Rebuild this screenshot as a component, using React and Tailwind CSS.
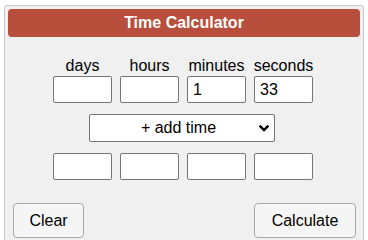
import React from "react";

const labels = ["days", "hours", "minutes", "seconds"];
const values = ["", "", "1", "33"];

function Field({ value }) {
  return (
    <input
      readOnly
      value={value}
      className="w-[59px] h-[27px] border border-[#767676] rounded-[2px] bg-white pl-[5px] text-[16px] leading-[18px] text-black outline-none"
    />
  );
}

export default function App() {
  return (
    <div className="w-[368px] h-[240px] bg-white overflow-hidden" style={{ fontFamily: '"Liberation Sans", Arial, sans-serif' }}>
      <div className="ml-[4px] mt-[5px] w-[360px] h-[260px] border border-[#c8c8c8] rounded-[3px] bg-[#f0f0f0] p-[3px]">
        <div className="h-[28px] rounded-[4px] bg-[#b84e3c] text-white font-bold text-[16px] leading-[28px] text-center">
          Time Calculator
        </div>
        <div className="mt-[20px] flex justify-center gap-[8px] pr-[2px]">
          {labels.map((l, i) => (
            <div key={l} className="flex flex-col items-center w-[59px]">
              <div className="text-[16px] leading-[18px] text-black whitespace-nowrap">{l}</div>
              <div className="mt-[1px]">
                <Field value={values[i]} />
              </div>
            </div>
          ))}
        </div>
        <div className="mt-[11px] flex justify-center">
          <div className="relative mr-[5px] w-[186px] h-[28px] border border-[#767676] rounded-[2px] bg-white flex items-center justify-center text-[16px] text-black">
            <span className="pr-[6px]">+ add time</span>
            <svg className="absolute right-[5px] top-[10px]" width="10" height="7" viewBox="0 0 10 7">
              <path d="M1.5 1.5 L5 5 L8.5 1.5" fill="none" stroke="#000" strokeWidth="2.4" strokeLinecap="square" />
            </svg>
          </div>
        </div>
        <div className="mt-[11px] flex justify-center gap-[8px] pr-[2px]">
          {labels.map((l) => (
            <Field key={l} value="" />
          ))}
        </div>
        <div className="mt-[23px] flex justify-between pl-[5px] pr-[4px]">
          <button className="h-[35px] w-[71px] border border-[#a8a8a8] rounded-[4px] bg-[#f5f5f5] text-[16px] leading-[18px] text-black">
            Clear
          </button>
          <button className="h-[35px] w-[102px] border border-[#a8a8a8] rounded-[4px] bg-[#f5f5f5] text-[16px] leading-[18px] text-black">
            Calculate
          </button>
        </div>
      </div>
    </div>
  );
}
